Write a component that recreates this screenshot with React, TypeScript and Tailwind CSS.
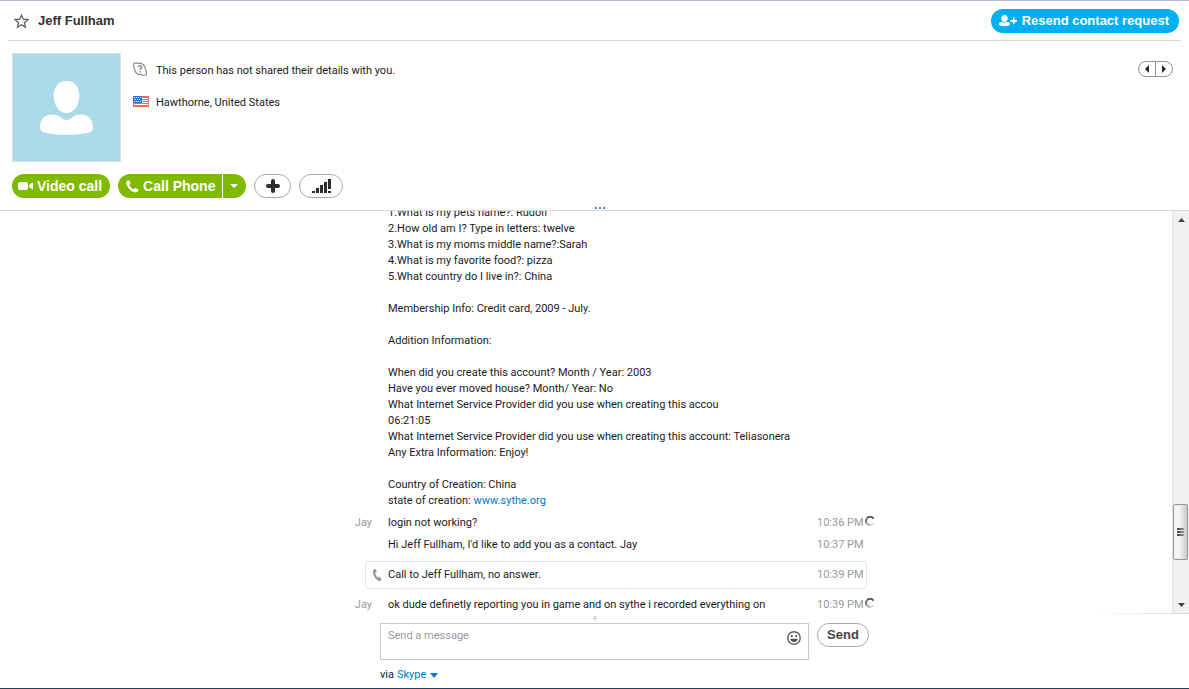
import { useState, type FormEvent } from "react";

type Message = {
  author?: string;
  lines: string[];
  link?: string;
  time?: string;
  pending?: boolean;
  call?: boolean;
};

const messages: Message[] = [
  {
    lines: [
      "1.What is my pets name?: Rudolf",
      "2.How old am I? Type in letters: twelve",
      "3.What is my moms middle name?:Sarah",
      "4.What is my favorite food?: pizza",
      "5.What country do I live in?: China",
      "",
      "Membership Info: Credit card, 2009 - July.",
      "",
      "Addition Information:",
      "",
      "When did you create this account? Month / Year: 2003",
      "Have you ever moved house? Month/ Year: No",
      "What Internet Service Provider did you use when creating this accou",
      "06:21:05",
      "What Internet Service Provider did you use when creating this account: Teliasonera",
      "Any Extra Information: Enjoy!",
      "",
      "Country of Creation: China",
      "state of creation: ",
    ],
    link: "www.sythe.org",
  },
  { author: "Jay", lines: ["login not working?"], time: "10:36 PM", pending: true },
  { lines: ["Hi Jeff Fullham, I'd like to add you as a contact. Jay"], time: "10:37 PM" },
  { lines: ["Call to Jeff Fullham, no answer."], time: "10:39 PM", call: true },
  {
    author: "Jay",
    lines: ["ok dude definetly reporting you in game and on sythe i recorded everything on"],
    time: "10:39 PM",
    pending: true,
  },
];

function PhoneIcon() {
  return (
    <svg viewBox="0 0 13 13" className="size-[13px]" fill="currentColor" aria-hidden="true">
      <path d="M.8 1C1.700.1 2.800 0 3.300.8l1 1.900c.3.6.1 1.100-.5 1.600-.5.5-.4 1 0 1.700.6 1.100 1.700 2.200 2.900 2.800.7.4 1.200.4 1.600-.1.6-.6 1.100-.8 1.700-.5l1.900 1c.8.5.7 1.600-.2 2.400-1.300 1.200-3.700 1-5.800-.3C3.600 9.700 1.700 7.500.7 5.100 0 3.500-.1 2.100.8 1Z" />
    </svg>
  );
}

function HandsetIcon() {
  return (
    <svg viewBox="0 0 9 12" className="h-3 w-[9px]" fill="currentColor" aria-hidden="true">
      <path d="M.5.7C1.100 0 2.300-.1 2.800.2l.9 2.300c.1.500-.1.800-.5 1l-.9.5c.2 1.600 1 3.200 2.300 4.400l1-.5c.4-.2.7-.1 1 .2l1.900 1.800c.2.700-.2 1.500-1 1.900-1.200.6-3-.1-4.500-1.800C1.100 7.800.1 5.400 0 3.200-.1 2.200 0 1.300.5.7Z" />
    </svg>
  );
}

function Avatar() {
  return (
    <svg
      viewBox="0 0 107 107"
      role="img"
      aria-label="Jeff Fullham"
      className="size-[109px] shrink-0 border border-[#d5e3e8] bg-[#abdbe9]"
    >
      <path
        fill="#fff"
        d="M53.500 27c8 0 12.800 6 12.800 14.500C66.300 51 61 59 53.500 59S40.700 51 40.700 41.500C40.700 33 45.500 27 53.500 27Z"
      />
      <path
        fill="#fff"
        d="M40 60.500c6 0 9.500 5.500 13.500 5.500S61 60.500 67 60.500c8 0 12.500 4 13 12 .2 3.500-1 5-4 6-6 1.800-14 2.300-22.500 2.300S37 80.300 31 78.500c-3-1-4.200-2.500-4-6 .5-8 5-12 13-12Z"
      />
    </svg>
  );
}

function FlagIcon() {
  return (
    <svg viewBox="0 0 16 11" className="h-[11px] w-4" shapeRendering="crispEdges" aria-hidden="true">
      <rect width="16" height="11" fill="#f0694e" />
      <path stroke="#fff" d="M1 2.500h14M1 4.500h14M1 6.500h14M1 8.500h14" />
      <rect width="9" height="7" fill="#3a70dc" />
      <path stroke="#e4eefe" strokeDasharray="1 1" d="M1 1.500h7M2 3.500h6M1 5.500h7" />
      <path fill="none" stroke="#e8705a" d="M9 .5h6.500v10H.5V7" />
    </svg>
  );
}

function Spinner() {
  return (
    <svg viewBox="0 0 10 10" className="mt-px size-[10px] shrink-0" fill="none" strokeWidth="2" aria-label="Sending">
      <path stroke="#555" d="M8.500 2.600A4 4 0 0 0 2.200 2.200" />
      <path stroke="#777" d="M2.200 2.200A4 4 0 0 0 1.600 7" />
      <path stroke="#aaa" d="M1.600 7A4 4 0 0 0 5 9" />
      <path stroke="#ddd" d="M5 9A4 4 0 0 0 8.500 7.200" />
    </svg>
  );
}

function MessageRow({ message }: { message: Message }) {
  const frame = message.call
    ? "mx-[10px] my-[2px] h-7 rounded border border-[#e5e6ea] items-center"
    : "items-start";
  const lead = message.call ? "w-[22px] pr-[6px]" : "w-[33px] pr-4";

  return (
    <li className={`flex ${frame}`}>
      <span className={`flex shrink-0 justify-end whitespace-nowrap text-[#999] ${lead}`}>
        {message.call ? <HandsetIcon /> : message.author}
      </span>
      <div className="min-w-0 flex-1 whitespace-nowrap">
        {message.lines.map((line, i) => (
          <p key={i} className="h-4">
            {line}
            {message.link && i === message.lines.length - 1 && (
              <a href="#sythe" className="text-[#0078ca]">
                {message.link}
              </a>
            )}
          </p>
        ))}
      </div>
      <span className={`flex shrink-0 gap-1 whitespace-nowrap text-[#999] ${message.call ? "w-[49px]" : "w-[60px]"}`}>
        <time className="w-[44px]">{message.time}</time>
        {message.pending && <Spinner />}
      </span>
    </li>
  );
}

function Scrollbar() {
  return (
    <div className="flex w-[17px] shrink-0 flex-col items-center border-l border-[#e3e3e3] bg-[#f0f0f0]">
      <button type="button" aria-label="Scroll up" className="flex h-[17px] w-full items-center justify-center">
        <svg viewBox="0 0 7 4" className="h-1 w-[7px]" fill="#444">
          <path d="M0 4 3.500 0 7 4Z" />
        </svg>
      </button>
      <div className="flex w-full grow flex-col">
        <div className="grow-[276]" />
        <div className="mr-px flex h-14 flex-col items-center justify-center gap-px rounded-xs border border-[#979797] bg-linear-to-r from-[#f5f5f5] from-40% to-[#c9cacd]">
          <span className="h-[2px] w-[7px] bg-linear-to-r from-[#444] to-[#999]" />
          <span className="h-[2px] w-[7px] bg-linear-to-r from-[#444] to-[#999]" />
          <span className="h-[2px] w-[7px] bg-linear-to-r from-[#444] to-[#999]" />
        </div>
        <div className="grow-[36]" />
      </div>
      <button type="button" aria-label="Scroll down" className="flex h-[17px] w-full items-center justify-center">
        <svg viewBox="0 0 7 4" className="h-1 w-[7px]" fill="#444">
          <path d="M0 0h7L3.500 4Z" />
        </svg>
      </button>
    </div>
  );
}

function ProfileHeader() {
  return (
    <header>
      <div className="mx-2 flex h-10 items-center border-b border-[#d8d8d8] pt-px pr-[2px] pl-[6px]">
        <button type="button" aria-label="Add to favorites">
          <svg viewBox="0 0 15 15" className="size-[15px]" fill="none" stroke="#555a60" strokeWidth="1.200">
            <path d="m7.500 1 1.800 4.200 4.600.4-3.500 3.100 1.100 4.500-4-2.400-4 2.400 1.100-4.500-3.500-3.100 4.600-.4Z" />
          </svg>
        </button>
        <h1 className="ml-[9px] grow text-[13px] font-bold text-[#333] [font-family:'Liberation_Sans',Arial,sans-serif]">
          Jeff Fullham
        </h1>
        <button
          type="button"
          className="flex h-6 items-center gap-[5px] rounded-full bg-[#00aff0] pr-[10px] pl-2 text-[13px] font-bold text-white [font-family:'Liberation_Sans',Arial,sans-serif]"
        >
          <svg viewBox="0 0 18 12" className="h-3 w-[18px]" fill="currentColor" aria-hidden="true">
            <path d="M5.500 0C7.600 0 8.700 1.500 8.700 3.300S7.500 7 5.500 7 2.300 5.100 2.300 3.300 3.400 0 5.500 0Z" />
            <path d="M2.600 6.800c1 0 1.700 1 2.900 1s1.900-1 2.900-1c1.700 0 2.600 1.200 2.600 2.700 0 1.200-2.500 1.700-5.500 1.700S0 10.700 0 9.500c0-1.500.9-2.700 2.600-2.700Z" />
            <path d="M14 2.500h1.600v2.600H18v1.600h-2.400v2.600H14V6.700h-2.600V5.100H14Z" />
          </svg>
          Resend contact request
        </button>
      </div>

      <div className="flex items-start pt-3 pr-4 pl-3">
        <Avatar />
        <div className="ml-3 grow space-y-4 pt-[9px]">
          <p className="flex h-4 items-start">
            <svg viewBox="0 0 14 14" className="mr-[9px] size-[14px]" fill="none" stroke="#8a8d90" strokeWidth="1.200" aria-hidden="true">
              <path d="M.7 1.300C2.600.4 4.300.9 5.300 1.500 8.800.7 12.300 3 12.300 7c1.300 2 1.300 4 .9 5.700-1.900.8-3.500.7-4.700-.2C5 13.200 1.700 11 1.700 7.200.5 5.300.3 3.200.7 1.300Z" />
              <path strokeWidth="1.500" d="M5.200 5c.2-1.600 3.500-1.500 3.500.2 0 1.400-1.600 1.300-1.600 2.700M7.100 9v1.500" />
            </svg>
            <span className="pt-px">This person has not shared their details with you.</span>
          </p>
          <p className="flex h-4 items-start gap-[7px]">
            <span className="pt-[2px]">
              <FlagIcon />
            </span>
            <span className="pt-px">Hawthorne, United States</span>
          </p>
        </div>
        <div className="mt-2 flex h-4 divide-x divide-[#8f9499] rounded-full border border-[#8f9499]">
          <button type="button" aria-label="Previous" className="flex w-[17px] items-center justify-center">
            <svg viewBox="0 0 4 8" className="h-2 w-1" fill="#222">
              <path d="M4 0v8L0 4Z" />
            </svg>
          </button>
          <button type="button" aria-label="Next" className="flex w-4 items-center justify-center">
            <svg viewBox="0 0 4 8" className="h-2 w-1" fill="#222">
              <path d="M0 0v8l4-4Z" />
            </svg>
          </button>
        </div>
      </div>

      <div className="relative flex border-b border-[#d8d8d8] px-3 py-3 text-[14px] font-bold text-white [font-family:'Liberation_Sans',Arial,sans-serif]">
        <button type="button" className="mr-2 flex h-6 items-center gap-1 rounded-full bg-[#7fba00] pr-2 pl-[6px]">
          <svg viewBox="0 0 15 8" className="h-2 w-[15px]" fill="currentColor" aria-hidden="true">
            <rect width="10" height="8" rx="2" />
            <path d="M11 3.200 14 .8c.5-.4 1-.2 1 .4v5.600c0 .6-.5.8-1 .4L11 4.800Z" />
          </svg>
          Video call
        </button>
        <button type="button" className="flex h-6 items-center gap-1 rounded-l-full bg-[#7fba00] pr-[7px] pl-2">
          <PhoneIcon />
          Call Phone
        </button>
        <button
          type="button"
          aria-label="More call options"
          className="ml-px flex h-6 w-[23px] items-center justify-center rounded-r-full bg-[#7fba00] pr-px"
        >
          <svg viewBox="0 0 8 4" className="h-1 w-2" fill="currentColor">
            <path d="M0 0h8L4 4Z" />
          </svg>
        </button>
        <button
          type="button"
          aria-label="Add people"
          className="ml-2 flex h-6 w-[37px] items-center justify-center rounded-full border border-[#a5aaad]"
        >
          <svg viewBox="0 0 14 14" className="size-[14px]" stroke="#2b2d33" strokeWidth="4" strokeLinecap="round">
            <path d="M7 2v10M2 7h10" />
          </svg>
        </button>
        <button
          type="button"
          aria-label="Call quality"
          className="ml-2 flex h-6 w-[44px] items-center justify-center rounded-full border border-[#a5aaad]"
        >
          <svg viewBox="0 0 19 14" className="h-[14px] w-[19px]" fill="#2b2d33" shapeRendering="crispEdges">
            <path d="M0 12h3v2H0ZM4 9h3v5H4ZM8 6h3v8H8ZM12 3h3v11h-3ZM16 0h3v10h-3ZM16 12h3v2h-3Z" />
          </svg>
        </button>
        <button type="button" aria-label="Resize panel" className="absolute bottom-px left-1/2 flex gap-[2px]">
          <span className="size-[2px] bg-[#5f80b4]" />
          <span className="size-[2px] bg-[#5f80b4]" />
          <span className="size-[2px] bg-[#5f80b4]" />
        </button>
      </div>
    </header>
  );
}

function Composer() {
  const [text, setText] = useState("");

  function handleSubmit(e: FormEvent<HTMLFormElement>) {
    e.preventDefault();
    setText("");
  }

  return (
    <form onSubmit={handleSubmit} className="relative flex justify-center border-b border-[#1f3d5c] pt-[9px] pb-[5px] pl-15">
      <span className="absolute top-[2px] left-1/2 size-1 -translate-x-1/2 rounded-full border border-[#b9bfca]" />
      <div className="w-[489px]">
        <div className="flex items-start gap-2">
          <div className="flex h-[37px] grow items-start border border-[#c8c8c8] pr-[7px]">
            <textarea
              aria-label="Send a message"
              value={text}
              onChange={(e) => setText(e.target.value)}
              placeholder="Send a message"
              rows={1}
              className="mt-1 h-7 grow resize-none px-[7px] outline-none placeholder:text-[#999]"
            />
            <button type="button" aria-label="Insert emoticon" className="mt-[7px]">
              <svg viewBox="0 0 14 14" className="size-[14px]" fill="none" stroke="#5f6165" strokeWidth="1.400">
                <circle cx="7" cy="7" r="6.200" />
                <path fill="#4d4f53" stroke="none" d="M4 4h1.600v2H4ZM8.400 4H10v2H8.400ZM3.300 7.800h7.400C10.300 9.900 9 11 7 11S3.700 9.900 3.300 7.800Z" />
              </svg>
            </button>
          </div>
          <button
            type="submit"
            className="h-6 w-[52px] rounded-full border border-[#a5aaad] text-[13px] font-bold text-[#444] [font-family:'Liberation_Sans',Arial,sans-serif]"
          >
            Send
          </button>
        </div>
        <p className="mt-[7px] flex gap-[3px]">
          via
          <button type="button" className="flex items-center gap-1 text-[#0078ca]">
            Skype
            <svg viewBox="0 0 8 5" className="h-[5px] w-2" fill="currentColor" aria-hidden="true">
              <path d="M0 0h8L4 5Z" />
            </svg>
          </button>
        </p>
      </div>
    </form>
  );
}

export default function App() {
  return (
    <div className="flex h-screen flex-col border-t border-[#b5bad0] bg-white text-[11px] leading-4 text-[#1a1a1a] [font-family:Roboto,Tahoma,sans-serif]">
      <ProfileHeader />
      <main className="flex min-h-0 grow">
        <div className="flex min-w-0 grow flex-col items-center justify-end overflow-hidden pl-15">
          <ul className="flex w-[522px] flex-col gap-[6px]">
            {messages.map((message, i) => (
              <MessageRow key={i} message={message} />
            ))}
          </ul>
        </div>
        <Scrollbar />
      </main>
      <div className="ml-auto h-px w-[94px] shrink-0 bg-linear-to-r from-white to-[#d5d8e2]" />
      <Composer />
    </div>
  );
}
